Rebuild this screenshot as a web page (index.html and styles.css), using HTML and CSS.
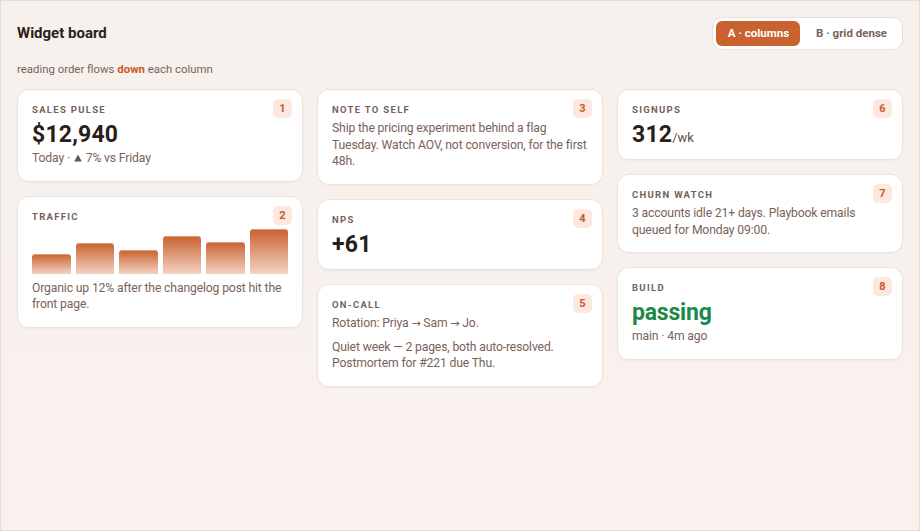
FILE: index.html
```html
<!DOCTYPE html>
<html lang="en">
<head>
<meta charset="utf-8">
<title>Widget board</title>
<link rel="stylesheet" href="styles.css">
</head>
<body>
<div class="page">
  <header class="top">
    <h1 class="title">Widget board</h1>
    <div class="toggle">
      <button class="tbtn active">A · columns</button>
      <button class="tbtn">B · grid dense</button>
    </div>
  </header>
  <p class="sub">reading order flows <b>down</b> each column</p>
  <main class="board">
    <div class="col">
      <section class="card">
        <span class="badge">1</span>
        <div class="label">Sales pulse</div>
        <div class="value">$12,940</div>
        <p class="text">Today · <svg class="tri" width="8" height="8" viewBox="0 0 8 8"><polygon points="4,0.5 7.8,7.5 0.2,7.5" fill="#6a5850"/></svg> 7% vs Friday</p>
      </section>
      <section class="card">
        <span class="badge">2</span>
        <div class="label">Traffic</div>
        <div class="chart">
          <div class="bar" style="height:20px"></div>
          <div class="bar" style="height:31px"></div>
          <div class="bar" style="height:24px"></div>
          <div class="bar" style="height:38px"></div>
          <div class="bar" style="height:32px"></div>
          <div class="bar" style="height:45px"></div>
        </div>
        <p class="text">Organic up 12% after the changelog post hit the front page.</p>
      </section>
    </div>
    <div class="col">
      <section class="card">
        <span class="badge">3</span>
        <div class="label">Note to self</div>
        <p class="text">Ship the pricing experiment behind a flag Tuesday. Watch AOV, not conversion, for the first 48h.</p>
      </section>
      <section class="card">
        <span class="badge">4</span>
        <div class="label">NPS</div>
        <div class="value">+61</div>
      </section>
      <section class="card">
        <span class="badge">5</span>
        <div class="label">On-call</div>
        <p class="text">Rotation: Priya <span class="arr">→</span> Sam <span class="arr">→</span> Jo.</p>
        <p class="text gap">Quiet week — 2 pages, both auto-resolved. Postmortem for #221 due Thu.</p>
      </section>
    </div>
    <div class="col">
      <section class="card">
        <span class="badge">6</span>
        <div class="label">Signups</div>
        <div class="value">312<span class="unit">/wk</span></div>
      </section>
      <section class="card">
        <span class="badge">7</span>
        <div class="label">Churn watch</div>
        <p class="text">3 accounts idle 21+ days. Playbook emails queued for Monday 09:00.</p>
      </section>
      <section class="card">
        <span class="badge">8</span>
        <div class="label">Build</div>
        <div class="value ok">passing</div>
        <p class="text">main · 4m ago</p>
      </section>
    </div>
  </main>
</div>
</body>
</html>
```
FILE: styles.css
```css
* { box-sizing: border-box; }
html, body { margin: 0; padding: 0; }
body {
  font-family: Roboto, "Liberation Sans", Arial, sans-serif;
  color: #2b201b;
}
.page {
  height: 100vh;
  border: 1px solid #e8ddd6;
  background: linear-gradient(180deg, #f6f1ed 0%, #f9f1ee 100%);
  padding: 16px 16px 0 16px;
}
.top {
  display: flex;
  justify-content: space-between;
  align-items: center;
  height: 32px;
}
.title {
  margin: 0;
  font-size: 15px;
  font-weight: 700;
  color: #2b1f1a;
}
.toggle {
  display: flex;
  gap: 4px;
  padding: 3px;
  background: #fff;
  border: 1px solid #ecdfd7;
  border-radius: 10px;
}
.tbtn {
  font-family: inherit;
  font-size: 11.5px;
  font-weight: 700;
  height: 25px;
  padding: 0 12px;
  border: 0;
  border-radius: 6px;
  background: transparent;
  color: #7a645a;
  cursor: pointer;
}
.tbtn.active {
  background: #c9622f;
  color: #fff;
  padding: 0 11px 0 12px;
}
.sub {
  margin: 13px 0 0 0;
  font-size: 11.4px;
  line-height: 14px;
  color: #7a6358;
}
.sub b { color: #c8582a; font-weight: 700; }
.board {
  margin-top: 13px;
  display: grid;
  grid-template-columns: repeat(3, 1fr);
  gap: 14px;
  align-items: start;
}
.col {
  display: flex;
  flex-direction: column;
  gap: 14px;
}
.card {
  position: relative;
  background: #fff;
  border: 1px solid #ede2db;
  border-radius: 12px;
  padding: 14px 14px 14px 14px;
  box-shadow: 0 1px 2px rgba(120, 80, 60, 0.05);
}
.badge {
  position: absolute;
  top: 9px;
  right: 10px;
  min-width: 19px;
  height: 19px;
  border-radius: 5px;
  background: #fce8df;
  color: #c85a2a;
  font-size: 11px;
  font-weight: 700;
  display: flex;
  align-items: center;
  justify-content: center;
}
.label {
  font-size: 9.5px;
  line-height: 11px;
  font-weight: 700;
  letter-spacing: 1.3px;
  text-transform: uppercase;
  color: #74625a;
  margin-bottom: 5px;
}
.value {
  font-size: 23px;
  line-height: 21px;
  font-weight: 700;
  letter-spacing: 0.2px;
  color: #2a1e19;
  margin-top: 9px;
}
.value + .text { margin-top: 5px; }
.value.ok { color: #1b8a48; letter-spacing: -0.2px; }
.unit {
  font-size: 13px;
  font-weight: 400;
  letter-spacing: 0;
  line-height: 0;
  color: #5e4c44;
}
.text {
  margin: 0;
  font-size: 12.2px;
  line-height: 16.5px;
  letter-spacing: -0.15px;
  color: #7a6358;
}
.text.gap { margin-top: 6.5px; }
.tri { display: inline-block; vertical-align: 0; margin: 0 1px; }
.arr { font-family: "DejaVu Sans", sans-serif; font-size: 11px; }
.chart {
  display: flex;
  align-items: flex-end;
  gap: 5px;
  height: 46px;
  margin: 6px 0 6px 0;
}
.bar {
  flex: 1;
  border-radius: 3px 3px 0 0;
  background: linear-gradient(180deg, #c9622f 0%, #f3d3c3 100%);
  box-shadow: inset 0 1px 0 rgba(255, 255, 255, 0.35);
}
```
